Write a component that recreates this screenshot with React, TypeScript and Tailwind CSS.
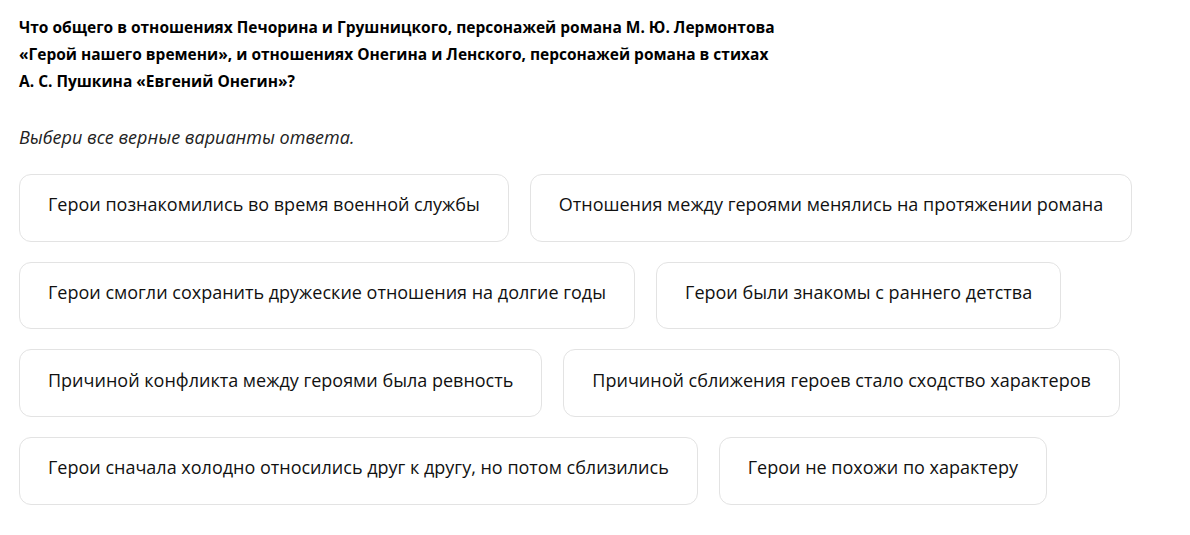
import React from 'react';

const options = [
  'Герои познакомились во время военной службы',
  'Отношения между героями менялись на протяжении романа',
  'Герои смогли сохранить дружеские отношения на долгие годы',
  'Герои были знакомы с раннего детства',
  'Причиной конфликта между героями была ревность',
  'Причиной сближения героев стало сходство характеров',
  'Герои сначала холодно относились друг к другу, но потом сблизились',
  'Герои не похожи по характеру',
];

const OptionButton: React.FC<{ label: string }> = ({ label }) => (
  <button className="h-[67.67px] px-[28px] pb-[7px] rounded-[12px] border border-[#e3e3e3] bg-white text-[18px] text-[#111] leading-none">
    {label}
  </button>
);

export default function App() {
  return (
    <div className="min-h-screen bg-white pl-[19px] pt-[14px] font-['Open_Sans',sans-serif] text-black">
      <h2 className="text-[15.5px] font-bold leading-[27px] max-w-[820px]">
        Что общего в отношениях Печорина и Грушницкого, персонажей романа М. Ю. Лермонтова
        <br />
        «Герой нашего времени», и отношениях Онегина и Ленского, персонажей романа в стихах
        <br />
        А. С. Пушкина «Евгений Онегин»?
      </h2>
      <p className="mt-[29px] text-[18px] italic leading-[26px] text-[#222]">Выбери все верные варианты ответа.</p>
      <div className="mt-[24px] flex flex-wrap gap-x-[21px] gap-y-[20px] max-w-[1120px]">
        {options.map(o => (
          <OptionButton key={o} label={o} />
        ))}
      </div>
    </div>
  );
}
